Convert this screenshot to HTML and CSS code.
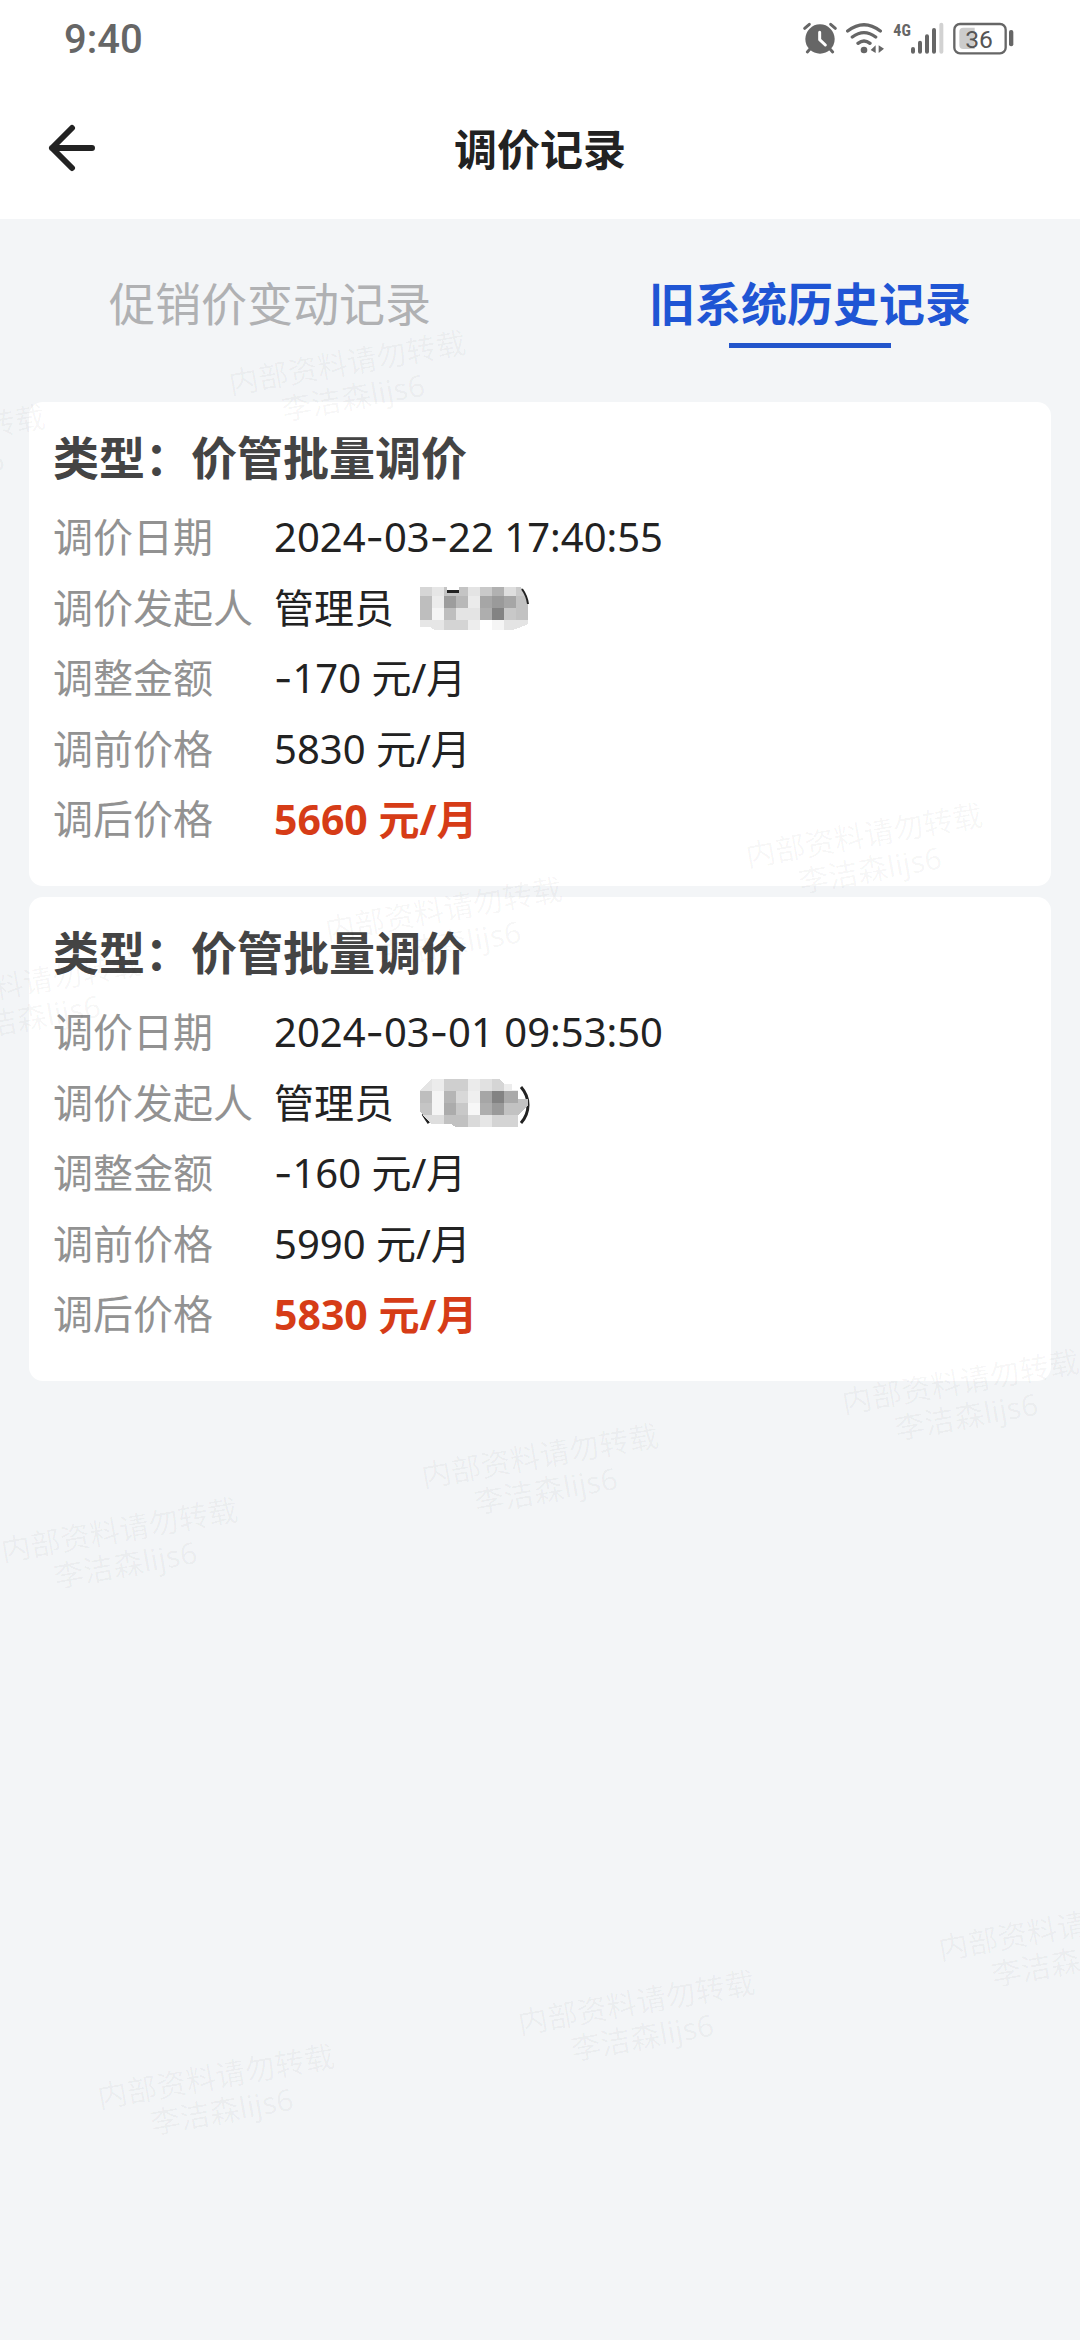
FILE: index.html
```html
<!DOCTYPE html>
<html lang="zh-CN">
<head>
<meta charset="utf-8">
<meta name="viewport" content="width=device-width, initial-scale=1">
<title>调价记录</title>
<link rel="stylesheet" href="styles.css">
</head>
<body>
<div class="page">
  <header class="top">
    <div class="status">
      <span class="clock">9:40</span>
      <div class="status-icons">
        <svg width="36" height="34" viewBox="66 60 108 102" aria-label="闹钟">
          <circle cx="120" cy="114" r="44" fill="#666"/>
          <path d="M74 82L88 70M166 82L152 70M92 142L82 153M148 142L158 153" stroke="#666" stroke-width="9" stroke-linecap="round"/>
          <path d="M119 94V116L136 132" fill="none" stroke="#fff" stroke-width="9" stroke-linecap="round" stroke-linejoin="round"/>
        </svg>
        <svg width="40" height="34" viewBox="195 60 120 102" aria-label="无线网络">
          <path d="M203 90Q252 52 301 90M217 108Q252 82 287 108M234 127Q252 113 270 127" fill="none" stroke="#666" stroke-width="10" stroke-linecap="round"/>
          <circle cx="252" cy="147" r="10" fill="#666"/>
          <path d="M287 133V156L272 147ZM296 133L312 143L296 156Z" fill="#666"/>
        </svg>
        <svg width="53" height="34" viewBox="330 60 159 102" aria-label="移动信号">
          <text class="net" x="334" y="106">4G</text>
          <path d="M393 144V152M414 125V152M435 106V152M456 87V152" stroke="#666" stroke-width="12" stroke-linecap="round"/>
          <path d="M478 71V152" stroke="#d2d2d2" stroke-width="12" stroke-linecap="round"/>
        </svg>
        <svg width="62" height="34" viewBox="516 60 186 102" aria-label="电量">
          <rect x="523" y="69" width="154" height="88" rx="17" fill="none" stroke="#666" stroke-width="7"/>
          <path d="M550 80H584V144H550Q538 144 538 132V92Q538 80 550 80Z" fill="#ccc"/>
          <text class="charge" x="597" y="141" text-anchor="middle">36</text>
          <rect x="687" y="87" width="13" height="49" rx="6" fill="#666"/>
        </svg>
      </div>
    </div>
    <nav class="bar">
      <button class="back" type="button" aria-label="返回">
        <svg width="48" height="48" viewBox="0 0 48 48"><path d="M24 4L4 24L24 44M4 24H44" fill="none" stroke="#222" stroke-width="6" stroke-linecap="round" stroke-linejoin="round"/></svg>
      </button>
      <h1 class="heading">调价记录</h1>
    </nav>
  </header>

  <div class="tabs" role="tablist">
    <button class="tab" type="button" role="tab" aria-selected="false">促销价变动记录</button>
    <button class="tab tab-active" type="button" role="tab" aria-selected="true">旧系统历史记录</button>
  </div>

  <main class="records">
    <section class="card">
      <h2 class="card-title">类型：价管批量调价</h2>
      <dl class="fields">
        <dt>调价日期</dt><dd>2024<span class="dash">-</span>03<span class="dash">-</span>22 17:40:55</dd>
        <dt>调价发起人</dt>
        <dd class="person">管理员
          <svg class="mosaic" width="110" height="48" viewBox="0 0 110 48" aria-hidden="true">
            <g shape-rendering="crispEdges">
              <path fill="#d6d6d6" d="M0 3h12v9H0z"/><path fill="#e6e6e6" d="M12 3h12v9H12z"/><path fill="#c4c4c4" d="M24 3h24v9H24z"/><path fill="#e4e4e4" d="M48 3h12v9H48z"/><path fill="#c9c9c9" d="M60 3h12v9H60z"/><path fill="#b1b1b1" d="M72 3h12v9H72z"/><path fill="#dedede" d="M84 3h12v9H84z"/><path fill="#cbcbcb" d="M96 3h5l4 9h-9z"/>
              <path fill="#bebebe" d="M0 12h12v24H0z"/><path fill="#ececec" d="M12 12h12v12H12z"/><path fill="#9d9d9d" d="M24 12h12v12H24z"/><path fill="#b8b8b8" d="M36 12h12v12H36z"/><path fill="#ebebeb" d="M48 12h12v12H48z"/><path fill="#a6a6a6" d="M60 12h12v12H60z"/><path fill="#9a9a9a" d="M72 12h12v12H72z"/><path fill="#a6a6a6" d="M84 12h12v12H84z"/><path fill="#c2c2c2" d="M96 12h9l3 8v16H96z"/>
              <path fill="#f5f5f5" d="M12 24h12v12H12z"/><path fill="#bebebe" d="M24 24h12v12H24z"/><path fill="#e4e4e4" d="M36 24h24v12H36z"/><path fill="#aeaeae" d="M60 24h12v12H60z"/><path fill="#838383" d="M72 24h12v12H72z"/><path fill="#c8c8c8" d="M84 24h12v12H84z"/>
              <path fill="#e6e6e6" d="M0 36h24v10h-9l-5-3H0z"/><path fill="#d4d4d4" d="M24 36h24v10H24z"/><path fill="#ededed" d="M48 36h12v10H48z"/><path fill="#f5f5f5" d="M72 36h12v10H72z"/><path fill="#e4e4e4" d="M84 36h24v4l-9 4-7 2h-8z"/>
              <path fill="#fff" d="M27 3h12v3H27z"/><path fill="#222" d="M27 6h12v3H27z"/>
            </g>
            <path d="M102 5Q107 12 108 20" fill="none" stroke="#222" stroke-width="2"/>
          </svg>
        </dd>
        <dt>调整金额</dt><dd><span class="dash">-</span>170 元/月</dd>
        <dt>调前价格</dt><dd>5830 元/月</dd>
        <dt>调后价格</dt><dd class="after">5660 元/月</dd>
      </dl>
    </section>

    <section class="card">
      <h2 class="card-title">类型：价管批量调价</h2>
      <dl class="fields">
        <dt>调价日期</dt><dd>2024<span class="dash">-</span>03<span class="dash">-</span>01 09:53:50</dd>
        <dt>调价发起人</dt>
        <dd class="person">管理员
          <svg class="mosaic" width="110" height="48" viewBox="0 0 110 48" aria-hidden="true">
            <path d="M3 35Q6 40 9 44M101 8Q108 16 108 26T101 44" fill="none" stroke="#222" stroke-width="3"/>
            <g shape-rendering="crispEdges">
              <path fill="#e4e4e4" d="M0 12v-1L11 0h1v12z"/><path fill="#ececec" d="M12 0h12v12H12z"/><path fill="#cfcfcf" d="M24 0h24v12H24z"/><path fill="#ebebeb" d="M48 0h12v12H48z"/><path fill="#e1e1e1" d="M60 0h12v12H60z"/><path fill="#d5d5d5" d="M72 0h7l5 5v7H72z"/><path fill="#ececec" d="M84 5h8v6h6v1H84z"/>
              <path fill="#bebebe" d="M0 12h12v12H0z"/><path fill="#f5f5f5" d="M12 12h12v24H12z"/><path fill="#b5b5b5" d="M24 12h12v12H24z"/><path fill="#d8d8d8" d="M36 12h12v12H36z"/><path fill="#efefef" d="M48 12h12v12H48z"/><path fill="#a6a6a6" d="M60 12h12v12H60z"/><path fill="#838383" d="M72 12h12v12H72z"/><path fill="#aaa" d="M84 12h14v12H84z"/>
              <path fill="#c5c5c5" d="M0 24h12v12H3l-3-4z"/><path fill="#acacac" d="M24 24h12v12H24z"/><path fill="#c8c8c8" d="M36 24h12v12H36z"/><path fill="#f7f7f7" d="M48 24h12v12H48z"/><path fill="#aeaeae" d="M60 24h12v12H60z"/><path fill="#9a9a9a" d="M72 24h12v12H72z"/><path fill="#c2c2c2" d="M84 24h14v-4h10v6l-10 10H84z"/>
              <path fill="#dedede" d="M3 36h21v9H11z"/><path fill="#c1c1c1" d="M24 36h24v12H36l-5-3h-7z"/><path fill="#dadada" d="M48 36h12v12H48z"/><path fill="#e6e6e6" d="M60 36h12v12H60z"/><path fill="#d4d4d4" d="M72 36h26v12H72z"/>
            </g>
          </svg>
        </dd>
        <dt>调整金额</dt><dd><span class="dash">-</span>160 元/月</dd>
        <dt>调前价格</dt><dd>5990 元/月</dd>
        <dt>调后价格</dt><dd class="after">5830 元/月</dd>
      </dl>
    </section>
  </main>

  <div class="watermark" aria-hidden="true">
    <div class="watermark-grid">
      <p>内部资料请勿转载<br>李洁森lijs6</p><p>内部资料请勿转载<br>李洁森lijs6</p><p></p>
      <p>内部资料请勿转载<br>李洁森lijs6</p><p>内部资料请勿转载<br>李洁森lijs6</p><p>内部资料请勿转载<br>李洁森lijs6</p>
      <p>内部资料请勿转载<br>李洁森lijs6</p><p>内部资料请勿转载<br>李洁森lijs6</p><p>内部资料请勿转载<br>李洁森lijs6</p>
      <p>内部资料请勿转载<br>李洁森lijs6</p><p>内部资料请勿转载<br>李洁森lijs6</p><p>内部资料请勿转载<br>李洁森lijs6</p>
    </div>
  </div>
</div>
</body>
</html>
```

FILE: styles.css
```css
* {
  box-sizing: border-box;
}

body {
  margin: 0;
  font-family: "Noto Sans", "Noto Sans CJK SC", sans-serif;
  color: #222;
  background: #f3f5f7;
}

button {
  padding: 0;
  border: 0;
  background: none;
  font-family: inherit;
}

.page {
  position: relative;
  min-height: 100vh;
}

.top {
  background: #fff;
}

/* Status bar */
.status {
  display: flex;
  align-items: center;
  justify-content: space-between;
  height: 76px;
  padding: 0 66px 0 64px;
  color: #666;
}

.clock {
  padding-top: 4px;
  font: 500 40px/72px Roboto, sans-serif;
}

.status-icons {
  display: flex;
  gap: 7px;
}

.net {
  font: 700 48px "Roboto Condensed", Roboto, sans-serif;
  fill: #666;
}

.charge {
  font: 400 74px Roboto, sans-serif;
  fill: #555;
}

/* Title bar */
.bar {
  display: grid;
  grid-template-columns: 48px 1fr 48px;
  align-items: center;
  height: 143px;
  padding: 0 48px;
}

.back {
  height: 48px;
}

.back svg {
  display: block;
}

.heading {
  margin: 0;
  padding-top: 4px;
  font-size: 43px;
  line-height: 60px;
  font-weight: 700;
  text-align: center;
}

/* Tabs */
.tabs {
  display: grid;
  grid-template-columns: 1fr 1fr;
  padding: 49px 0 54px;
}

.tab {
  display: flex;
  flex-direction: column;
  align-items: center;
  gap: 5px;
  font-size: 46px;
  line-height: 70px;
  color: #b0b1b3;
}

.tab::after {
  content: "";
  width: 30%;
  height: 5px;
}

.tab-active {
  font-weight: 700;
  color: #1f55d4;
}

.tab-active::after {
  background: #2255cb;
}

/* Record cards */
.records {
  display: flex;
  flex-direction: column;
  gap: 11px;
  padding: 0 29px 40px;
}

.card {
  padding: 20px 24px 32px;
  border-radius: 14px;
  background: #fff;
}

.card-title {
  margin: 0 0 10px;
  font-size: 46px;
  line-height: 70px;
  font-weight: 700;
  color: #444;
}

.fields {
  display: grid;
  grid-template-columns: 221px 1fr;
  margin: 0;
  font-size: 40px;
  line-height: 70px;
}

.fields dt {
  color: #929292;
}

.fields dd {
  margin: 0;
}

.dash {
  font-family: Inter, sans-serif;
}

.person {
  display: flex;
  align-items: center;
  gap: 26px;
}

.fields .after {
  font-size: 41px;
  font-weight: 700;
  color: #d63c17;
}

/* Slanted watermark over the whole page */
.watermark {
  position: absolute;
  inset: 0;
  overflow: hidden;
  pointer-events: none;
}

.watermark-grid {
  position: absolute;
  top: 217px;
  left: -329px;
  display: grid;
  grid-template-columns: repeat(3, 427px);
  grid-auto-rows: 555px;
  place-items: center;
  transform: rotate(-10deg);
  transform-origin: 0 0;
  font-size: 30px;
  line-height: 35px;
  text-align: center;
  color: rgba(0, 0, 0, 0.04);
}

.watermark-grid p {
  margin: 0;
}
```
